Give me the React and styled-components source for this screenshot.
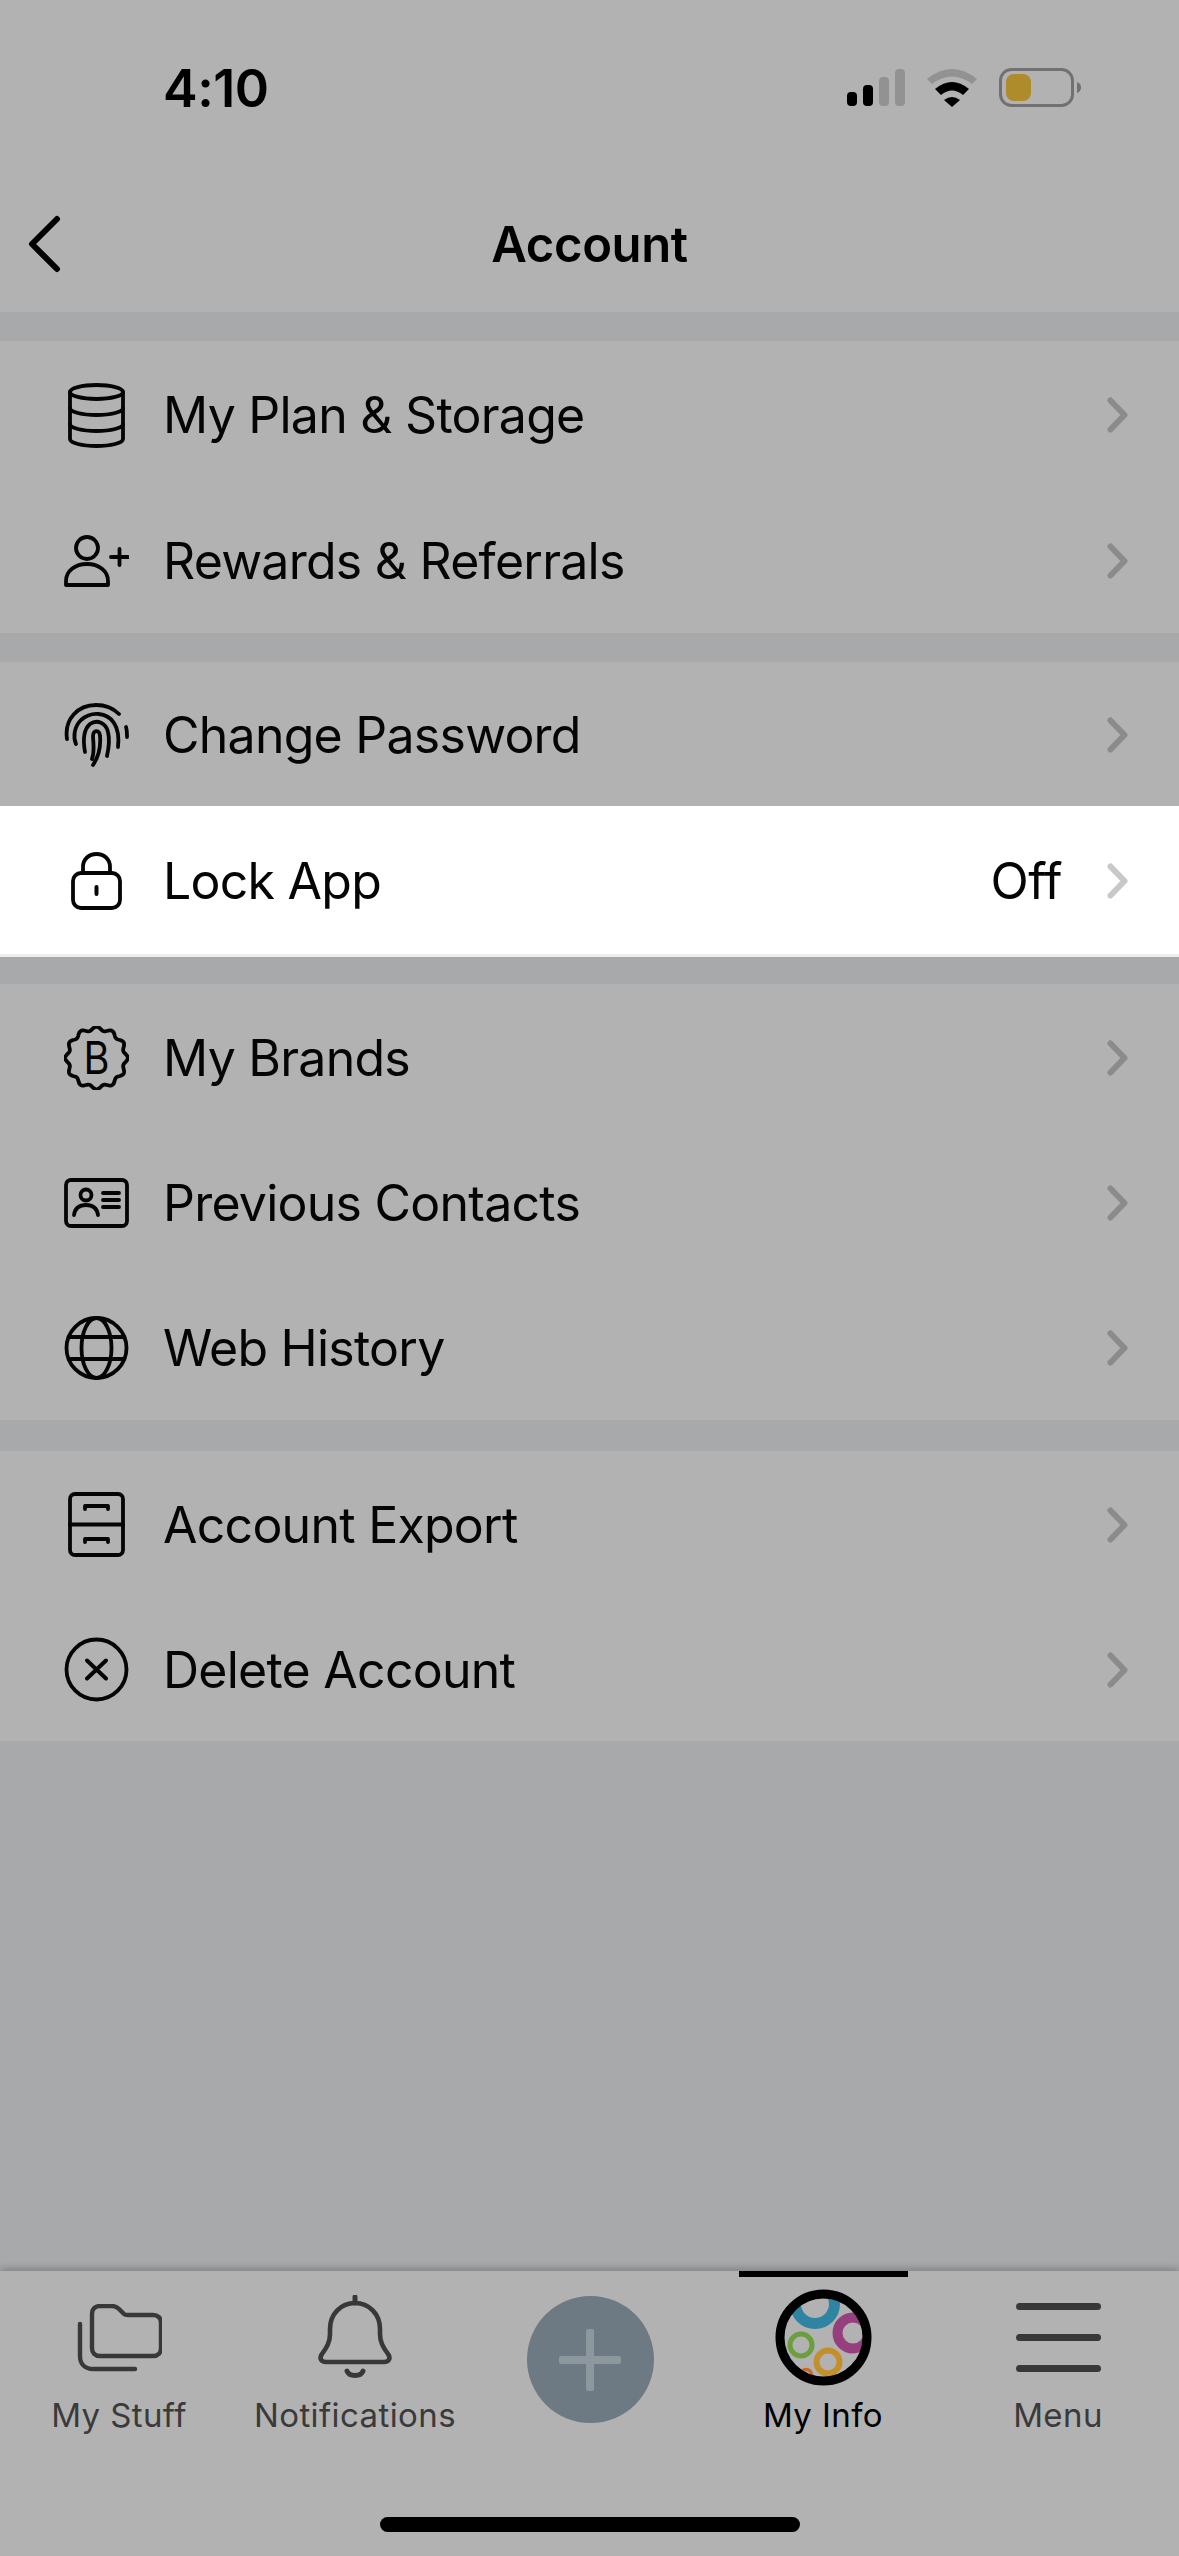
import React from 'react';
import styled, { createGlobalStyle } from 'styled-components';

const Global = createGlobalStyle`
  html, body {
    margin: 0;
    padding: 0;
    background: #a8a9ab;
  }
  * {
    box-sizing: border-box;
  }
`;

const FONT = `Inter, "Liberation Sans", sans-serif`;

const Page = styled.div`
  width: 1179px;
  height: 2556px;
  display: flex;
  flex-direction: column;
  overflow: hidden;
  background: #a8a9ab;
  font-family: ${FONT};
  color: #050505;
`;

const Header = styled.header`
  height: 312px;
  flex-shrink: 0;
  background: #b2b2b2;
`;

const StatusBar = styled.div`
  height: 176px;
  display: flex;
  align-items: center;
  padding: 0 98px 0 163px;
`;

const Time = styled.div`
  flex: 1;
  font-size: 52px;
  font-weight: 600;
  letter-spacing: -0.5px;
  color: #000;
`;

const StatusIcons = styled.div`
  display: flex;
  align-items: center;
  gap: 22px;
`;

const NavBar = styled.div`
  height: 136px;
  display: grid;
  grid-template-columns: 1fr auto 1fr;
  align-items: center;
`;

const BackLink = styled.div`
  display: flex;
  padding-left: 28px;
`;

const Title = styled.h1`
  margin: 0;
  font-size: 49px;
  font-weight: 600;
  letter-spacing: -0.4px;
  color: #000;
`;

const Group = styled.section`
  height: ${p => p.$height}px;
  margin-top: ${p => p.$top}px;
  flex-shrink: 0;
  display: flex;
  flex-direction: column;
  background: ${p => (p.$lit ? '#fff' : '#b2b2b2')};
  border-bottom: ${p => (p.$lit ? '3px solid #eeeeee' : 'none')};
`;

const Row = styled.div`
  flex: 1;
  display: flex;
  align-items: center;
  padding: 2px 51px 0 64px;
`;

const IconSlot = styled.div`
  width: 65px;
  margin-right: 34px;
  display: flex;
  justify-content: center;
  flex-shrink: 0;
`;

const RowLabel = styled.span`
  flex: 1;
  font-size: 50px;
  letter-spacing: -0.75px;
`;

const RowValue = styled.span`
  font-size: 50px;
  letter-spacing: -0.6px;
  margin-right: 45px;
`;

const TabBar = styled.footer`
  margin-top: auto;
  height: 285px;
  flex-shrink: 0;
  background: #b2b2b2;
  box-shadow: 0 -3px 7px rgba(0, 0, 0, 0.22);
`;

const Tabs = styled.nav`
  display: grid;
  grid-template-columns: 238px 234px 236px 230px 240px;
  height: 163px;
`;

const Tab = styled.div`
  position: relative;
  display: flex;
  flex-direction: column;
  align-items: center;
  color: ${p => (p.$active ? '#000' : '#3a3a3a')};
`;

const ActiveMark = styled.div`
  position: absolute;
  top: 0;
  left: 50%;
  margin-left: -84px;
  width: 169px;
  height: 6px;
  background: #000;
`;

const TabIcon = styled.div`
  height: 97px;
  margin-top: 18px;
  display: flex;
  align-items: center;
  justify-content: center;
`;

const TabLabel = styled.span`
  margin-top: 10px;
  font-size: 33px;
  line-height: 38px;
  letter-spacing: 0.4px;
  white-space: nowrap;
`;

const AddButton = styled.div`
  width: 127px;
  height: 127px;
  margin-top: 25px;
  border-radius: 50%;
  background: #6d7a83;
  display: flex;
  align-items: center;
  justify-content: center;
`;

const MenuLines = styled.div`
  width: 85px;
  display: flex;
  flex-direction: column;
  gap: 24px;

  & > i {
    display: block;
    height: 7px;
    border-radius: 4px;
    background: #383838;
  }
`;

const HomeBar = styled.div`
  width: 420px;
  height: 15px;
  margin: 83px auto 0;
  border-radius: 8px;
  background: #000;
`;

const line = {
  fill: 'none',
  stroke: 'currentColor',
  strokeWidth: 3.8,
  strokeLinecap: 'round',
  strokeLinejoin: 'round',
};

const Signal = () => (
  <svg width="58" height="38" viewBox="0 0 58 38">
    <rect x="0" y="23" width="10" height="14" rx="4" fill="#000" />
    <rect x="16" y="16" width="10" height="21" rx="4" fill="#000" />
    <rect x="32" y="8" width="10" height="29" rx="4" fill="#929292" />
    <rect x="48" y="0" width="10" height="37" rx="4" fill="#929292" />
  </svg>
);

const Wifi = () => (
  <svg width="50" height="38" viewBox="0 0 50 38">
    <path d="M0 10 Q25 -10 50 10 L45 15 Q25 0 5 15 Z" fill="#929292" />
    <path d="M8 20 Q25 6 42 20 L36 26 Q25 17 14 26 Z" fill="#000" />
    <path d="M17 31 Q25 25 33 31 L25 38 Z" fill="#000" />
  </svg>
);

const Battery = () => (
  <svg width="82" height="40" viewBox="0 0 82 40">
    <rect x="1.5" y="1.5" width="72" height="36" rx="11" fill="none" stroke="#717171" strokeWidth="3" />
    <rect x="7" y="6" width="25" height="27" rx="8" fill="#ae8c2c" />
    <path d="M78 14 C81 15 82 17 82 19.5 C82 22 81 24 78 25 Z" fill="#717171" />
  </svg>
);

const BackIcon = () => (
  <svg width="33" height="58" viewBox="0 0 33 58">
    <path d="M29 4 L4 29 L29 54" fill="none" stroke="#000" strokeWidth="6" strokeLinecap="round" strokeLinejoin="round" />
  </svg>
);

const Chevron = ({ lit }) => (
  <svg width="21" height="36" viewBox="0 0 21 36">
    <path d="M3.5 3.5 L17.5 18 L3.5 32.5" fill="none" stroke={lit ? '#c8c8c8' : '#8b8b8b'} strokeWidth="6" strokeLinecap="round" strokeLinejoin="round" />
  </svg>
);

const StorageIcon = () => (
  <svg width="57" height="65" viewBox="0 0 57 65">
    <ellipse cx="28.5" cy="9" rx="26.5" ry="7" {...line} />
    <path d="M2 9 V56 C2 60 14 63 28.5 63 C43 63 55 60 55 56 V9" {...line} />
    <path d="M2 25 C2 29 14 32 28.5 32 C43 32 55 29 55 25" {...line} />
    <path d="M2 41 C2 45 14 48 28.5 48 C43 48 55 45 55 41" {...line} />
  </svg>
);

const ReferralIcon = () => (
  <svg width="65" height="52" viewBox="0 0 65 52">
    <circle cx="23" cy="13" r="11" {...line} />
    <path d="M2 50 V46 C2 36 11 29 23 29 C35 29 44 36 44 46 V50 Z" {...line} />
    <path d="M47 22 H64 M55.5 14 V30" {...line} />
  </svg>
);

const FingerprintIcon = () => (
  <svg width="65" height="64" viewBox="0 0 65 64">
    <path d="M3 36 C0 16 14 2 32 2 C41 2 49 5 55 11" {...line} />
    <path d="M62 24 C63 27 63 30 63 34" {...line} />
    <path d="M12 41 C9 34 10 24 17 17 C27 8 43 9 50 20 C54 26 55 35 54 44" {...line} />
    <path d="M21 49 C19 38 19 27 26 21 C33 16 42 20 44 29 C46 37 45 44 43 53" {...line} />
    <path d="M28 56 C31 48 29 38 29 33 C29 26 36 27 36 33 C37 44 35 53 29 62" {...line} />
  </svg>
);

const LockIcon = () => (
  <svg width="51" height="58" viewBox="0 0 51 58">
    <rect x="2" y="21" width="47" height="35" rx="8" {...line} />
    <path d="M12 21 V15 C12 7 18 2 25.5 2 C33 2 39 7 39 15 V21" {...line} />
    <path d="M25.5 35 V42" {...line} strokeWidth="4" />
  </svg>
);

const scallops = () => {
  const pts = [];
  for (let i = 0; i <= 240; i++) {
    const a = (i / 240) * Math.PI * 2;
    const r = 29.5 + 1.8 * Math.cos(a * 12);
    pts.push(`${(32.5 + r * Math.cos(a)).toFixed(2)} ${(32 + r * Math.sin(a)).toFixed(2)}`);
  }
  return `M${pts.join(' L')} Z`;
};

const BrandIcon = () => (
  <svg width="65" height="64" viewBox="0 0 65 64">
    <path d={scallops()} {...line} />
    <text x="32.5" y="48" textAnchor="middle" fontFamily={FONT} fontSize="45" textLength="26" lengthAdjust="spacingAndGlyphs" fill="currentColor">B</text>
  </svg>
);

const ContactsIcon = () => (
  <svg width="65" height="50" viewBox="0 0 65 50">
    <rect x="2" y="2" width="61" height="46" rx="5" {...line} />
    <circle cx="22" cy="17" r="5.5" {...line} />
    <path d="M10 37 C11 30 16 27 22 27 C28 27 33 30 34 37" {...line} />
    <path d="M39 15 H55 M39 22 H55 M39 29 H55" {...line} />
  </svg>
);

const GlobeIcon = () => (
  <svg width="65" height="64" viewBox="0 0 65 64">
    <circle cx="32.5" cy="32" r="30" {...line} />
    <ellipse cx="32.5" cy="32" rx="15" ry="30" {...line} />
    <path d="M5 21 H60 M5 43 H60" {...line} />
  </svg>
);

const ExportIcon = () => (
  <svg width="57" height="65" viewBox="0 0 57 65">
    <rect x="2" y="2" width="53" height="61" rx="5" {...line} />
    <path d="M2 32.5 H55" {...line} />
    <path d="M17 17 V14 H40 V17 M17 50 V47 H40 V50" {...line} />
  </svg>
);

const DeleteIcon = () => (
  <svg width="65" height="65" viewBox="0 0 65 65">
    <circle cx="32.5" cy="32.5" r="30" {...line} />
    <path d="M23 23.5 L42 41.5 M42 23.5 L23 41.5" {...line} strokeWidth="4" />
  </svg>
);

const FolderIcon = () => (
  <svg width="86" height="68" viewBox="-2 0 86 68">
    <path d="M23 2 H35 C38 2 40 3 42 5 L47 10 C48 11 49 11 51 11 H76 C81 11 84 14 84 19 V44 C84 49 81 52 76 52 H23 C18 52 15 49 15 44 V10 C15 5 18 2 23 2 Z" fill="none" stroke="#383838" strokeWidth="4.4" strokeLinejoin="round" transform="translate(-1 0)" />
    <path d="M2 20 V52 C2 60 7 65 15 65 H57" fill="none" stroke="#383838" strokeWidth="4.4" strokeLinecap="round" />
  </svg>
);

const BellIcon = () => (
  <svg width="74" height="85" viewBox="0 0 74 85">
    <path d="M37 2 V8" fill="none" stroke="#383838" strokeWidth="5" strokeLinecap="round" />
    <path d="M37 8 C23 8 12 19 12 34 V39 C12 47 9 52 4 59 C1 63 3 67 8 67 H66 C71 67 73 63 70 59 C65 52 62 47 62 39 V34 C62 19 51 8 37 8 Z" fill="none" stroke="#383838" strokeWidth="4.6" strokeLinejoin="round" />
    <path d="M29 76 C31 82 43 82 45 76" fill="none" stroke="#383838" strokeWidth="5" strokeLinecap="round" />
  </svg>
);

const PlusIcon = () => (
  <svg width="62" height="62" viewBox="0 0 62 62">
    <path d="M31 3 V59 M3 31 H59" fill="none" stroke="#8d979e" strokeWidth="8" strokeLinecap="round" />
  </svg>
);

const AvatarIcon = () => (
  <svg width="97" height="97" viewBox="0 0 97 97">
    <defs>
      <clipPath id="avatarClip">
        <circle cx="48.5" cy="48.5" r="42" />
      </clipPath>
    </defs>
    <g clipPath="url(#avatarClip)" fill="none">
      <circle cx="40" cy="15" r="19.5" stroke="#2f84a2" strokeWidth="11" />
      <circle cx="78" cy="44" r="15.5" stroke="#953f7f" strokeWidth="10" />
      <circle cx="26" cy="56" r="11" stroke="#6b9e3e" strokeWidth="5" />
      <circle cx="53" cy="73" r="11.5" stroke="#c38f2d" strokeWidth="6" />
      <circle cx="31" cy="86" r="5.5" stroke="#c96a26" strokeWidth="3.5" />
    </g>
    <circle cx="48.5" cy="48.5" r="43.5" fill="none" stroke="#000" strokeWidth="9" />
  </svg>
);

const groups = [
  { top: 29, height: 292, rows: [
    { label: 'My Plan & Storage', Icon: StorageIcon },
    { label: 'Rewards & Referrals', Icon: ReferralIcon },
  ] },
  { top: 29, height: 144, rows: [
    { label: 'Change Password', Icon: FingerprintIcon },
  ] },
  { top: 0, height: 151, lit: true, rows: [
    { label: 'Lock App', Icon: LockIcon, value: 'Off' },
  ] },
  { top: 27, height: 436, rows: [
    { label: 'My Brands', Icon: BrandIcon },
    { label: 'Previous Contacts', Icon: ContactsIcon },
    { label: 'Web History', Icon: GlobeIcon },
  ] },
  { top: 31, height: 290, rows: [
    { label: 'Account Export', Icon: ExportIcon },
    { label: 'Delete Account', Icon: DeleteIcon },
  ] },
];

const App = () => {
  return (
    <Page>
      <Global />
      <Header>
        <StatusBar>
          <Time>4:10</Time>
          <StatusIcons>
            <Signal />
            <Wifi />
            <Battery />
          </StatusIcons>
        </StatusBar>
        <NavBar>
          <BackLink><BackIcon /></BackLink>
          <Title>Account</Title>
        </NavBar>
      </Header>

      {groups.map(g => (
        <Group key={g.rows[0].label} $top={g.top} $height={g.height} $lit={g.lit}>
          {g.rows.map(({ label, Icon, value }) => (
            <Row key={label}>
              <IconSlot><Icon /></IconSlot>
              <RowLabel>{label}</RowLabel>
              {value && <RowValue>{value}</RowValue>}
              <Chevron lit={g.lit} />
            </Row>
          ))}
        </Group>
      ))}

      <TabBar>
        <Tabs>
          <Tab>
            <TabIcon><FolderIcon /></TabIcon>
            <TabLabel>My Stuff</TabLabel>
          </Tab>
          <Tab>
            <TabIcon><BellIcon /></TabIcon>
            <TabLabel>Notifications</TabLabel>
          </Tab>
          <Tab>
            <AddButton><PlusIcon /></AddButton>
          </Tab>
          <Tab $active>
            <ActiveMark />
            <TabIcon><AvatarIcon /></TabIcon>
            <TabLabel>My Info</TabLabel>
          </Tab>
          <Tab>
            <TabIcon>
              <MenuLines><i /><i /><i /></MenuLines>
            </TabIcon>
            <TabLabel>Menu</TabLabel>
          </Tab>
        </Tabs>
        <HomeBar />
      </TabBar>
    </Page>
  );
};

export default App;
